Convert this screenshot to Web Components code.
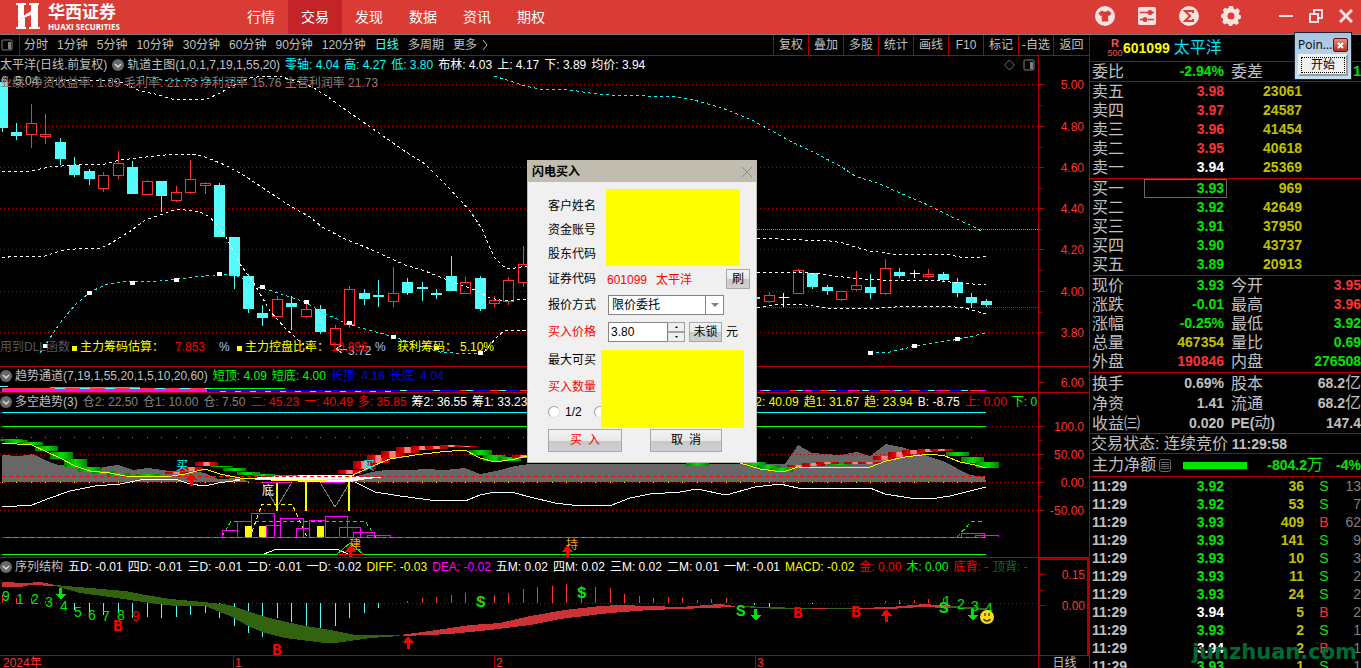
<!DOCTYPE html>
<html lang="zh-CN">
<head>
<meta charset="utf-8">
<title>华西证券 - 太平洋 601099</title>
<style>
html, body {
  margin: 0;
  height: 100%;
  background: #000;
  overflow: hidden;
}
body {
  font: 12px/18px "Liberation Sans", "Noto Sans CJK SC", sans-serif;
  color: #c0c0c0;
}
</style>
</head>
<body>
<trade-app></trade-app>

<script>
const RESET = `
:host, *, ::before, ::after { box-sizing: border-box; }
button, input, select {
  margin: 0;
  padding: 0;
  border: 0;
  background: none;
  font: inherit;
  color: inherit;
  white-space: nowrap;
}
svg { display: block; }
.r { color: #ff3232; }
.g { color: #00e600; }
.y { color: #c0c000; }
.w { color: #fff; }
`;

function define(name, html, extra) {
  customElements.define(name, class extends HTMLElement {
    constructor() {
      super();
      this.attachShadow({ mode: 'open' });
      this.shadowRoot.innerHTML = typeof html === 'function' ? html(this) : html;
      if (extra) extra(this);
    }
  });
}

/* ---------- red application bar ---------- */

const tabs = ['行情', '交易', '发现', '数据', '资讯', '期权'];

define('app-header', `
<style>
${RESET}
:host {
  display: flex;
  height: 35px;
  background: #d83c35;
  border-bottom: 1px solid #7d7d7d;
  color: #fff;
}
.brand {
  display: flex;
  align-items: center;
  gap: 8px;
  width: 234px;
  padding-left: 16px;
}
.brand svg { margin-bottom: 2px; }
.brand b {
  display: block;
  padding-top: 2px;
  font: 700 17px/18px "Liberation Serif", "Noto Sans CJK SC", serif;
}
.brand small {
  display: block;
  font: 700 8px/10px "Open Sans", sans-serif;
}
nav { display: flex; }
nav a {
  width: 54px;
  font-size: 14px;
  line-height: 34px;
  text-align: center;
  color: #fff;
  text-decoration: none;
}
nav a.on { background: #c42428; }
.icons { display: flex; margin-left: auto; opacity: .85; }
.icons button { width: 42px; display: grid; place-items: center; padding-bottom: 2px; }
.icons button.win { width: 30px; }
.icons .first { margin-left: 19px; }
</style>
<div class="brand">
  <svg width="24" height="26" viewBox="0 0 24 26" fill="#fff">
    <path d="M0 0h10v2H8v10.500L15 8V2h-2V0h10v2h-1v7C16 12 7 14 2 19V2H0z"/>
    <path d="M2 20C4 16 8 15 9 14.500V24h1v2H0v-2h2zM15 11l7-3v16h2v2H13v-2h2z"/>
  </svg>
  <div><b>华西证券</b><small>HUAXI SECURITIES</small></div>
</div>
<nav>${tabs.map(t => `<a href="#"${t === '交易' ? ' class="on"' : ''}>${t}</a>`).join('')}</nav>
<div class="icons">
  <button aria-label="皮肤"><svg width="20" height="20" viewBox="0 0 20 20"><circle cx="10" cy="10" r="10" fill="#fff"/><path d="M7 4.500 3.500 7l1.800 3 1.500-.8V15.500h6.400V9.200l1.500.8 1.800-3L13 4.500q-3 2.500-6 0z" fill="#d83c35"/></svg></button>
  <button aria-label="设置"><svg width="18" height="18" viewBox="0 0 18 18"><rect width="18" height="18" rx="2" fill="#fff"/><path d="M2 5.500h8M14 5.500h2M2 12.500h4M10 12.500h6" stroke="#d83c35" stroke-width="1.500"/><circle cx="12" cy="5.500" r="2.500" fill="#d83c35"/><circle cx="7" cy="12.500" r="2.500" fill="#d83c35"/></svg></button>
  <button aria-label="统计"><svg width="20" height="20" viewBox="0 0 20 20"><circle cx="10" cy="10" r="10" fill="#fff"/><path d="M14 7V5H6l5 5-5 5h8v-2" fill="none" stroke="#d83c35" stroke-width="2"/></svg></button>
  <button aria-label="选项"><svg width="20" height="20" viewBox="0 0 20 20"><path fill="#fff" fill-rule="evenodd" d="M8 0h4l.6 2.800 1.600.7L16.700 2 19 5l-1.400 2.400.5 1.400L20 9.500v3l-2.500.9-.7 1.400L18 17l-2.500 2-2.300-1.200-1.300.5L11 20H8l-.8-2-1.500-.6L3.500 18.500 1.200 16l1-2.300-.6-1.400L0 11.500v-3l2.300-.9.6-1.400L1.700 4 4 1.700l2.200 1.100L7.500 2zM10 6.500a3.500 3.500 0 1 0 0 7 3.500 3.500 0 0 0 0-7z"/></svg></button>
  <button class="win first" aria-label="最小化"><svg width="14" height="14"><path d="M0 7h14" stroke="#fff" stroke-width="2"/></svg></button>
  <button class="win" aria-label="还原"><svg width="14" height="14" fill="none" stroke="#fff" stroke-width="2"><path d="M1 5h8v8H1zM5 5V1h8v8H9"/></svg></button>
  <button class="win" aria-label="关闭"><svg width="14" height="14"><path d="M1 1l12 12M13 1L1 13" stroke="#fff" stroke-width="3"/></svg></button>
</div>
`);

/* ---------- period bar ---------- */

const periods = ['分时', '1分钟', '5分钟', '10分钟', '30分钟', '60分钟', '90分钟', '120分钟', '日线', '多周期', '更多'];
const tools = ['复权', '叠加', '多股', '统计', '画线', 'F10', '标记', '-自选', '返回'];
const PANEL_ICON = `<svg width="12" height="12"><rect x="1" y="1" width="10" height="10" rx="1" fill="none" stroke="#808080" stroke-width="1"/><path d="M7 3h3v7H7z" fill="#808080"/></svg>`;

define('period-bar', `
<style>
${RESET}
:host {
  display: flex;
  height: 21px;
  border-bottom: 1px solid #b00000;
}
.layout { width: 20px; padding-right: 6px; display: grid; place-items: center; border-right: 1px solid #b00000; }
.periods { display: flex; gap: 9px; padding-left: 4px; line-height: 20px; }
.periods .on { color: #54fcfc; }
.periods .more { display: flex; align-items: center; gap: 5px; }
.tools { display: flex; margin-left: auto; line-height: 20px; }
.tools button { width: 35px; border-left: 1px solid #b00000; text-align: center; }
.tools button:last-child { width: 36px; }
</style>
<button class="layout" aria-label="布局">${PANEL_ICON}</button>
<div class="periods">
${periods.map(p => `<button class="${p === '日线' ? 'on' : p === '更多' ? 'more' : ''}">${p}${p === '更多' ? '<svg width="6" height="12" fill="none" stroke="#c0c0c0"><path d="M1 1l4 5-4 5"/></svg>' : ''}</button>`).join('')}
</div>
<div class="tools">${tools.map(t => `<button>${t}</button>`).join('')}</div>
`);

/* ---------- chart drawing ---------- */

const STEP = 14.47;
const barX = i => Math.round(2 + STEP * i) + 0.5;
const poly = (pts, color, more = '') => `<polyline points="${pts}" fill="none" stroke="${color}" ${more}/>`;
const area = (pts, color) => `<polygon points="${pts}" fill="${color}"/>`;
const hline = (y, color, dash = '', x1 = 0, x2 = '100%') => `<line x1="${x1}" x2="${x2}" y1="${y}.5" y2="${y}.5" stroke="${color}"${dash ? ` stroke-dasharray="${dash}"` : ''}/>`;
const vline = (x, y1, y2, color, w = 1) => `<line x1="${x}" x2="${x}" y1="${y1}" y2="${y2}" stroke="${color}" stroke-width="${w}"/>`;
const box = (x, y, w, h, color) => `<rect x="${x}" y="${y}" width="${w}" height="${h}" fill="${color}"/>`;
const label = (x, y, t, color, more = '') => `<text x="${x}" y="${y}" fill="${color}" ${more}>${t}</text>`;
const upArrow = (x, y) => `<path d="M${x} ${y}l6 7h-4v6h-3v-6h-4z" fill="#f00"/>`;
const downArrow = (x, y) => `<path d="M${x - 1} ${y}h3v6h4l-5 6-6-6h4z" fill="#00e600"/>`;

// index, body top, body bottom, high, low, kind (d = down, u = up, x = flat)
const candles = [
  [0,82,128,80,132,'d'],[1,132,136,123,140,'d'],[2,123,135,104,148,'u'],[3,134,137,114,144,'u'],
  [4,142,159,138,165,'d'],[5,165,175,157,177,'d'],[6,171,179,169,185,'d'],[7,175,189,172,192,'u'],
  [8,163,176,151,179,'u'],[9,167,194,161,194,'d'],[10,181,195,180,195,'u'],[11,181,196,181,212,'d'],
  [12,192,201,186,202,'u'],[13,179,193,160,194,'u'],[14,183,186,182,194,'u'],[15,185,237,183,237,'d'],
  [16,237,276,237,289,'d'],[17,276,309,274,313,'d'],[18,313,318,305,326,'d'],[19,299,317,296,317,'u'],
  [20,303,307,296,330,'d'],[21,309,317,302,318,'u'],[22,309,332,305,334,'d'],[23,328,345,325,345,'u'],
  [24,289,325,286,328,'u'],[25,293,299,289,305,'d'],[26,295,297,280,307,'d'],[27,293,302,267,307,'u'],
  [28,282,293,278,295,'d'],[29,287,289,282,301,'d'],[30,293,295,289,299,'d'],[31,276,291,256,291,'d'],
  [32,282,294,277,294,'u'],[33,278,309,276,311,'d'],[34,300,304,296,307,'u'],[35,280,302,277,305,'u'],
  [36,264,283,246,287,'u'],[52,297,299,297,299,'d'],[53,295,302,292,303,'u'],[54,297,298,293,307,'x'],
  [55,270,294,269,294,'u'],[56,273,287,273,289,'d'],[57,287,291,285,295,'d'],[58,291,300,291,301,'u'],
  [59,285,290,271,291,'u'],[60,287,293,274,299,'d'],[61,268,294,259,295,'u'],[62,272,276,268,278,'d'],
  [63,273,274,270,278,'x'],[64,274,277,269,278,'u'],[65,274,280,272,282,'d'],[66,282,293,278,297,'d'],
  [67,297,303,293,308,'d'],[68,301,305,299,307,'d']
];

function drawCandle([i, top, bottom, high, low, kind]) {
  const x = barX(i);
  if (kind === 'x') return vline(x, high, low, '#fff') + hline(top, '#fff', '', x - 5, x + 5);
  if (kind === 'd') return vline(x, high, low, '#54fcfc') + box(x - 5.5, top, 11, bottom - top, '#54fcfc');
  return vline(x, high, top, '#ff3232') + vline(x, bottom, low, '#ff3232') +
    `<rect x="${x - 5}" y="${top + 0.5}" width="10" height="${bottom - top - 1}" fill="none" stroke="#ff3232"/>`;
}

function drawPrice() {
  const dash = 'stroke-dasharray="3 3"';
  let s = [84, 126, 167, 208, 249, 291, 332].map(y => hline(y, '#b00000', '1 3')).join('');
  s += hline(229, '#30d830', '1 1', 527) + hline(307, '#c01818', '1 1', 527);
  s += candles.map(drawCandle).join('');
  s += poly('48,80 110,80 123,83 140,91 155,94 172,99 205,100 222,92 228,88 250,78 264,76 282,77 303,83 314,88 328,97 343,108 403,150 425,164 447,186 460,200 470,211 482,229 494,257 503,266 509,269 527,266', '#fff', dash);
  s += poly('2,171 25,172 50,167 75,165 105,164 120,160 155,156 175,154 192,154 205,157 225,165 245,176 272,194 292,207 310,217 322,227 345,239 370,249 405,265 425,271 450,281 475,290 490,298 505,301 527,299', '#fff', dash);
  s += poly('2,258 15,256 35,257 45,256 60,251 75,249 100,248 108,245 132,230 145,220 160,215 177,209 200,212 210,217 225,235 240,264 255,285 270,311 285,328 297,339 310,350', '#fff', dash);
  s += poly('484,352 490,345 497,337 505,330 520,330 527,331', '#fff', dash);
  s += poly('757,238 780,239 830,241 843,243 855,247 870,251 900,255 945,254 960,257 975,258 986,256', '#fff', dash);
  s += poly('757,273 800,272 820,274 850,278 880,280 930,280 960,283 986,285', '#fff', dash);
  s += poly('757,308 772,305 800,304 825,308 850,309 880,308 910,306 945,306 965,308 986,314', '#fff', dash);
  s += poly('40,353 50,338 60,323 75,305 90,292 105,285 120,282 160,281 195,277 225,274 237,276 258,287 275,292 290,297 305,302 322,312 345,323 368,330 395,337 415,345 440,352 455,353 480,353', '#00fcfc', dash);
  s += poly('141,76 165,80 240,80 250,78', '#00fcfc', dash);
  s += poly('494,76 510,81 525,86 540,89 570,90 590,93 610,95 645,96 675,97 690,99 705,103 722,108 752,120 770,130 790,141 815,153 840,166 855,176 880,184 900,193 930,206 950,216 972,226 983,232', '#00fcfc', dash);
  s += poly('870,353 890,352 915,346 960,339 986,333', '#00fcfc', dash);
  s += [[45,346],[89,293],[132,283],[176,280],[219,274],[262,287],[306,302],[349,323],[393,337],[436,348],[480,353],[870,353],[914,346],[957,339]]
    .map(([x, y]) => box(x - 2, y - 2, 5, 4, '#fff')).join('');
  s += poly('342,345 336,349 342,353', '#c0c0c0') + hline(349, '#c0c0c0', '', 336, 347);
  s += label(348, 355, '3.72', '#c0c0c0') + label(1, 85, '6', '#c0c0c0') + label(15, 85, '5.04', '#c0c0c0');
  return s;
}

function drawChannel() {
  return `<g stroke-width="1">${hline(386, '#54fcfc', '', 0, 8)}${hline(387, '#00fc00', '', 50, 140)}${hline(388, '#00fc00', '', 140, 285)}</g>` +
    box(2, 388, 205, 2, '#ff3232') + hline(388, '#54fcfc', '10 15', 55, 210) +
    box(2, 390, 205, 2, '#f0f') + box(207, 390, 179, 2, '#00f') + hline(391, '#54fcfc', '6 9', 220, 400) +
    hline(390, '#00f', '', 386, 986) + hline(390, '#ff3232', '10 20', 460, 986) +
    hline(390, '#f0f', '8 36', 760, 986) + hline(390, '#54fcfc', '7 26', 400, 986);
}

// x, middle y, height of the stepped trend ribbon
const downRibbon = [[0,440,2],[5,441,3],[20,443,3],[35,448,5],[50,455,7],[64,463,8],[78,469,5],[92,472,3],[107,474,3],[136,475,2],
  [210,466,1],[223,469,3],[237,473,3],[252,475,2],[266,476,2],[280,476,2],[469,452,5],[483,458,6],[498,459,4],
  [686,464,4],[743,464,4],[757,467,5],[770,470,4],[828,464,1],[946,454,4],[961,460,6],[976,465,6]];
const upRibbon = [[165,473,2],[180,469,4],[195,464,4],[338,472,4],[353,465,8],[367,459,8],[381,454,7],[396,450,6],[411,448,4],
  [425,447,3],[440,446,2],[455,446,1],[512,456,3],[787,466,2],[802,464,3],[816,463,2],[844,463,2],[858,463,2],[873,458,4],
  [888,454,5],[902,452,4],[917,450,3],[930,450,2]];
const steps = [[222,530,237],[237,521,251],[251,513,274],[266,525,280],[280,518,303],[296,528,309],[309,520,325],
  [325,516,347],[339,527,360],[353,532,374],[367,535,390],[961,533,984],[975,535,998]];

function drawTrend() {
  let s = '';
  s += area('2,482 2,455 20,456 33,454 45,460 58,465 70,465 95,470 103,467 118,465 133,470 148,468 170,471 185,470 205,473 218,479 240,478 250,482 340,482 350,478 372,472 385,470 410,470 425,469 445,470 465,468 480,474 500,470 515,466 530,464 785,464 798,445 812,453 840,455 857,452 870,456 886,444 905,448 925,455 945,462 970,475 985,477 986,482', '#686868');
  s += [426, 454, 482, 510].map(y => hline(y, '#b00000', '1 3')).join('');
  s += hline(412, '#00fcfc', '', 2, 986) + hline(426, '#00fc00', '', 2, 986) + hline(437, '#00e600', '1 13.47', 2, 986);
  s += downRibbon.map(([x, y, h]) => box(x, y - h / 2, 23, h, 'url(#green)')).join('');
  s += upRibbon.map(([x, y, h]) => box(x, y - h / 2, 23, h, 'url(#red)')).join('');
  s += hline(482, '#fcfc00', '1 13.47', 2, 986);
  s += area('230,480 262,477 310,475 350,475 365,477 385,477 360,480 350,482 315,482 280,481 250,479', '#fff');
  s += hline(476, '#f00', '4 3', 2, 986);
  s += poly('2,443 32,445 60,458 75,466 90,471 110,473 125,476 165,477 185,474 205,469 220,474 240,478 270,480 310,481 345,479 355,474 375,465 390,459 415,455 440,452 465,450 480,458 495,462 515,459 527,456', '#fcfc00');
  s += poly('740,463 760,469 783,472 798,467 840,468 870,467 886,461 905,457 930,454 945,456 960,462 975,465 986,468', '#fcfc00');
  s += poly('2,507 32,505 50,498 70,491 95,486 120,484 140,480 160,479 178,480 190,484 205,486 218,483 240,480', '#fff');
  s += poly('355,482 375,492 400,496 430,500 465,501 480,495 495,492 515,493 530,497 555,503 580,506 612,505 630,498 650,494 680,492 697,489 726,495 755,487 780,484 798,488 870,488 885,494 910,498 930,499 950,496 986,487', '#fff');
  s += poly('263,484 277,507 291,484', '#808080') + poly('321,484 335,507 349,484', '#808080');
  s += [277, 306, 349].map(x => vline(x, 482, 511, '#fcfc00', 2)).join('');
  s += hline(482, '#f0f', '', 263, 291) + hline(482, '#f0f', '', 321, 345);
  s += hline(537, '#00e600', '', 2, 986) + hline(537, '#f0f', '4 4', 2, 986) + hline(537, '#f00', '3 13', 2, 986);
  s += poly('222,537 231,521 365,521 376,537', '#00fc00', 'stroke-dasharray="4 3"');
  s += poly('957,537 972,521 985,521', '#00fc00', 'stroke-dasharray="4 3"');
  s += poly('252,532 262,504 292,504 300,522 307,537', '#fcfc00', 'stroke-dasharray="4 3"');
  s += steps.map(([x, y, x2]) => `<path d="M${x} 537V${y}H${x2}V537" fill="none" stroke="#f0f"/>`).join('');
  s += [245, 259, 317].map(x => box(x, 526, 7, 11, '#fcfc00')).join('');
  s += hline(554, '#00fc00', '', 2, 986);
  s += poly('264,554 277,549 337,549 350,555', '#fff') + poly('337,554 350,543 363,554', '#00fc00') + hline(554, '#f00', '', 337, 363);
  s += label(176, 470, '买', '#00fcfc') + label(363, 470, '买', '#00fcfc') + label(262, 495, '底', '#fff');
  s += label(349, 549, '建', '#ffa020') + label(566, 549, '持', '#ffa020');
  s += upArrow(191, 473) + upArrow(350, 545) + upArrow(567, 545);
  return s;
}

const macdDown = [[5,610],[6,614],[7,615],[8,612],[9,618],[10,617],[11,618],[12,617],[13,615],[14,613],[15,618],[16,626],[17,633],
  [18,637],[19,618],[20,622],[21,628],[22,629],[23,626],[24,618],[25,613],[26,608],[52,605],[53,607],[56,604],[62,604]];
const macdUp = [[0,595],[1,598],[2,598],[3,601],[28,601],[29,598],[30,597],[31,595],[32,593],[33,596],[34,595],[35,593],[36,589],[37,587],
  [38,586],[39,584],[40,586],[41,587],[42,588],[43,594],[44,596],[45,598],[46,597],[47,598],[48,600],[49,599],[50,598],
  [61,601],[62,600],[63,600],[64,599],[65,598]];
const counts = [[2,600,9],[16,603,1],[31,603,2],[45,606,3],[60,610,4],[74,616,5],[88,619,6],[102,620,7],[117,619,8],[943,605,1],[957,608,2],[971,610,3],[985,612,4]];

function drawSequence() {
  const mark = 'font-weight="700" font-size="16" font-family="Liberation Mono"';
  let s = hline(603, '#b00000', '1 3');
  s += macdDown.map(([i, y]) => vline(barX(i), 603, y, '#54fcfc')).join('');
  s += macdUp.map(([i, y]) => vline(barX(i), y, 603, '#ff3232')).join('');
  s += area('2,582 25,583 40,582 55,585 55,586 30,585 20,587 2,587', '#cc3237');
  s += area('55,585 90,588 125,591 140,594 170,599 203,602 230,605 250,612 270,618 300,625 330,630 355,635 400,635 400,636 370,638 335,643 325,643 285,638 265,633 250,627 230,616 205,606 175,606 150,603 110,597 80,593 55,586', '#326410');
  s += area('400,635 430,631 470,625 500,623 530,616 565,610 600,606 620,605 680,607 720,604 735,606 735,607 680,609 650,610 610,613 560,619 530,625 490,630 450,634 405,636', '#cc3237');
  s += area('740,606 770,607 800,608 812,608 812,609 780,609 740,607', '#326410') + box(812, 608, 16, 1, '#cc3237') + box(828, 608, 30, 1, '#326410');
  s += area('858,608 890,607 925,604 950,606 950,608 920,607 890,609 858,609', '#cc3237') + area('950,606 986,608 986,610 950,608', '#326410');
  s += counts.map(([x, y, t]) => label(x, y + 1, t, '#00e600', 'font-size="14"')).join('') + label(132, 621, '9', '#f00', 'font-size="14"');
  s += [[476,607],[577,598],[736,616],[939,613]].map(([x, y]) => label(x, y, 'S', '#00e600', mark)).join('');
  s += [[113,631],[272,655],[793,618],[851,617]].map(([x, y]) => label(x, y, 'B', '#f00', mark)).join('');
  s += downArrow(60, 588) + downArrow(755, 609) + downArrow(972, 609) + upArrow(408, 636) + upArrow(886, 609);
  s += '<g shape-rendering="auto"><circle cx="987" cy="617" r="7" fill="#fcd820"/><path d="M983.500 619q3.500 4 7 0M985 613v3M989 613v3" fill="none" stroke="#403000" stroke-width="1.300"/></g>';
  return s;
}

const drawings = {
  price: { top: 56, draw: drawPrice, axis: [[84,'5.00'],[126,'4.80'],[167,'4.60'],[208,'4.40'],[249,'4.20'],[291,'4.00'],[332,'3.80']], minor: [105,147,188,229,270,312] },
  channel: { top: 367, draw: drawChannel, axis: [[382,'6.00']], minor: [] },
  trend: { top: 393, draw: drawTrend, axis: [[426,'100.0'],[454,'50.00'],[482,'0.00'],[510,'-50.00']], minor: [440,468,496] },
  sequence: { top: 558, draw: drawSequence, axis: [[572,'0.15'],[603,'0.00']], minor: [588] }
};

define('chart-pane', el => {
  const d = drawings[el.getAttribute('kind')];
  return `
<style>
${RESET}
:host {
  display: grid;
  grid-template-columns: minmax(0, 1fr) 51px;
  border-bottom: 1px solid #b00000;
  overflow: hidden;
}
.plot { display: grid; min-width: 0; min-height: 0; overflow: hidden; }
.plot > * { grid-area: 1 / 1; min-width: 0; min-height: 0; }
.text { display: flex; flex-direction: column; justify-content: space-between; overflow: hidden; }
.axis { border-left: 1px solid #b00000; }
:host([kind="sequence"]) .axis { border: 2px solid #b00000; border-bottom: 0; }
svg { width: 100%; height: 100%; font-size: 12px; }
</style>
<div class="plot">
  <svg shape-rendering="crispEdges">
    <defs>
      <linearGradient id="green"><stop offset="0" stop-color="#008000"/><stop offset=".5" stop-color="#00e000"/><stop offset="1" stop-color="#008000"/></linearGradient>
      <linearGradient id="red"><stop offset="0" stop-color="#a00000"/><stop offset=".35" stop-color="#f00000"/><stop offset=".38" stop-color="#ff8080"/><stop offset=".62" stop-color="#ff8080"/><stop offset=".65" stop-color="#f00000"/><stop offset="1" stop-color="#a00000"/></linearGradient>
    </defs>
    <g transform="translate(0 ${-d.top})">${d.draw()}</g>
  </svg>
  <div class="text"><slot></slot><slot name="foot"></slot></div>
</div>
<div class="axis">
  <svg shape-rendering="crispEdges"><g transform="translate(0 ${-d.top})">
    ${d.axis.map(([y, t]) => hline(y, '#b00000', '', 0, 5) + label(45, y + 5, t, '#ff3232', 'text-anchor="end"')).join('')}
    ${d.minor.map(y => hline(y, '#b00000', '', 0, 3)).join('')}
  </g></svg>
</div>`;
});

/* indicator caption: name plus readings, each "text|colour|extra left margin" */
define('indicator-line', el => `
<style>
${RESET}
:host { display: flex; gap: 5px; height: 18px; line-height: 18px; white-space: nowrap; }
svg { flex: none; margin: 3px 0; }
.end { margin-left: auto; display: flex; align-items: center; gap: 8px; padding-right: 3px; }
span { flex: none; }
.name { margin-left: -2px; }
</style>
<slot></slot>
<svg width="12" height="12"><circle cx="6" cy="6" r="6" fill="#686868"/><path d="M3 5l3 3 3-3" fill="none" stroke="#ddd" stroke-width="1.500"/></svg>
<span class="name">${el.getAttribute('name')}</span>
${el.getAttribute('items').split(';').map(x => {
  const [t, c, m] = x.split('|');
  return `<span style="color:${c}${m ? `;margin-left:${m}px` : ''}">${t}</span>`;
}).join('')}
${el.hasAttribute('controls') ? `<span class="end"><svg width="11" height="12" fill="none" stroke="#707070"><path d="M5.500 1l5 5-5 5-5-5z"/></svg>${PANEL_ICON}</span>` : ''}
`);

define('chart-stack', `
<style>
${RESET}
:host {
  display: grid;
  grid-template-rows: minmax(311px, 1fr) 26px 165px 98px 12px;
  min-width: 0;
}
.fin { color: #808080; white-space: nowrap; }
.foot { display: flex; white-space: nowrap; padding-bottom: 10px; color: #fcfc00; }
.foot i { font-style: normal; }
.dim { color: #585858; }
.foot .dim { width: 72px; }
.sq::before { content: ""; display: inline-block; width: 5px; height: 5px; margin-right: 3px; background: #fcfc00; }
.sq { width: 103px; }
.sq + .v { width: 44px; color: #f00; }
.p { width: 18px; color: #a0c8ff; }
.sq + .far { width: 57px; }
.p2 { width: 22px; color: #a0c8ff; }
.foot .profit { width: 63px; }
.time {
  display: grid;
  grid-template-columns: 233px 261px 261px 1fr 51px;
  line-height: 15px;
  color: #ff3232;
  overflow: hidden;
}
.time span { padding-left: 3px; }
.time span + span { border-left: 1px solid #b00000; padding-left: 1px; }
.time span.unit { color: #c0c0c0; text-align: center; }
</style>
<chart-pane kind="price">
  <div>
    <indicator-line controls name="轨道主图(1,0,1,7,19,1,55,20)" items="零轴: 4.04|#00fcfc;高: 4.27|#00fcfc;低: 3.80|#00fcfc;布林: 4.03|#fff;上: 4.17|#fff;下: 3.89|#fff;均价: 3.94|#fff">太平洋(日线.前复权)</indicator-line>
    <div class="fin">业绩: 净资收益率: 1.89 毛利率: 21.73 净利润率 15.76 主营利润率 21.73</div>
  </div>
  <div class="foot" slot="foot"><i class="dim">用到DLL函数</i><i class="sq">主力筹码估算：</i><i class="v">7.853</i><i class="p">%</i><i class="sq" style="width:94px">主力控盘比率：</i><i class="v">10.896</i><i class="p2">%</i><i class="profit">获利筹码：</i><i>5.10%</i></div>
</chart-pane>
<chart-pane kind="channel">
  <indicator-line name="趋势通道(7,19,1,55,20,1,5,10,20,60)" items="短顶: 4.09|#00fc00;短底: 4.00|#00fc00;长顶: 4.16|#00f;长底: 4.04|#00f"></indicator-line>
</chart-pane>
<chart-pane kind="trend">
  <indicator-line name="多空趋势(3)" items="仓2: 22.50|#808080;仓1: 10.00|#808080;仓: 7.50|#808080;二: 45.23|#f00;一: 40.49|#f00;多: 35.85|#f00;筹2: 36.55|#fff;筹1: 33.23|#fff;趋2: 40.09|#fcfc00|211;趋1: 31.67|#fcfc00;趋: 23.94|#fcfc00;B: -8.75|#fff;上: 0.00|#f00;下: 0.00|#00fc00"></indicator-line>
</chart-pane>
<chart-pane kind="sequence">
  <indicator-line name="序列结构" items="五D: -0.01|#fff;四D: -0.01|#fff;三D: -0.01|#fff;二D: -0.01|#fff;一D: -0.02|#fff;DIFF: -0.03|#fcfc00;DEA: -0.02|#f0f;五M: 0.02|#fff;四M: 0.02|#fff;三M: 0.02|#fff;二M: 0.01|#fff;一M: -0.01|#fff;MACD: -0.02|#fcfc00;金: 0.00|#f00;木: 0.00|#00fc00;底背: -|#f00;顶背: -|#087028"></indicator-line>
  <div class="dim" slot="foot">用到未来数据</div>
</chart-pane>
<div class="time"><span>2024年</span><span>1</span><span>2</span><span>3</span><span class="unit">日线</span></div>
`);

/* ---------- quote panel ---------- */

const asks = [['卖五','3.98','23061','r'],['卖四','3.97','24587','r'],['卖三','3.96','41454','r'],['卖二','3.95','40618','r'],['卖一','3.94','25369','w']];
const bids = [['买一','3.93','969','g'],['买二','3.92','42649','g'],['买三','3.91','37950','g'],['买四','3.90','43737','g'],['买五','3.89','20913','g']];
const quote = [['现价','3.93','g','今开','3.95','r'],['涨跌','-0.01','g','最高','3.96','r'],['涨幅','-0.25%','g','最低','3.92','g'],['总量','467354','y','量比','0.69','g'],['外盘','190846','r','内盘','276508','g']];
const YI = '<span class="t">亿</span>';
const basics = [['换手','0.69%','','股本','68.2' + YI,''],['净资','1.41','','流通','68.2' + YI,''],['收益㈢','0.020','','<b>PE(</b>动<b>)</b>','147.4','']];
const ticks = [['3.92',36,'S',13],['3.92',53,'S',7],['3.93',409,'B',62],['3.93',141,'S',9],['3.93',10,'S',3],['3.93',11,'S',2],['3.93',24,'S',2],['3.94',5,'B',2],['3.93',2,'S',1],['3.94',2,'B',1],['3.93',1,'S',1]];

const depthRow = ([n, p, v, c]) => `<tr><th>${n}</th><td class="${c}${n === '买一' ? ' cur' : ''}">${p}</td><td class="y">${v}</td><td></td></tr>`;
const pairRow = ([a, av, ac, b, bv, bc]) => `<tr><th>${a}</th><td class="${ac}">${av}</td><th class="second">${b}</th><td class="${bc}">${bv}</td></tr>`;

define('quote-panel', `
<style>
${RESET}
:host {
  display: block;
  border-left: 1px solid #b00000;
  overflow: hidden;
  font-size: 14px;
  font-weight: 700;
}
.head { display: flex; align-items: center; height: 26px; padding-left: 17px; }
.badge { width: 16px; font: 700 11px/11px "Liberation Sans"; color: #ff5050; text-align: center; }
.badge small { display: block; font: 400 9px/9px "Liberation Sans"; }
.code { color: #fcfc00; }
.head .name { margin-left: 4px; color: #00e0fc; }
.name, th, .status span, .t { font-size: 16px; font-weight: 400; }
th b { font-size: 14px; }
section { border-top: 1px solid #b00000; }
table { width: 100%; border-collapse: collapse; table-layout: fixed; }
td, th { padding: 0; height: 19px; line-height: 19px; white-space: nowrap; text-align: right; }
th { text-align: left; padding-left: 2px; }
th.second { padding-left: 4px; }
.cur { outline: 1px solid #686868; outline-offset: -1px; }
.c1 { width: 54px; }
.c2 { width: 83px; }
.c3 { width: 75px; }
td:nth-child(2) { padding-right: 3px; }
.ratio { height: 20px; }
.five { height: 97px; }
.three { height: 61px; }
.status { height: 20px; padding-left: 1px; line-height: 19px; white-space: nowrap; }
.flow { display: flex; align-items: center; height: 23px; padding-left: 2px; white-space: nowrap; }
.flow svg { margin: 0 12px 0 3px; }
.flow .bar { width: 64px; height: 7px; background: #00e600; }
.flow b { margin-left: auto; line-height: 21px; }
.flow b + b { width: 38px; margin-left: 0; text-align: right; }
.ticks td { height: 18px; line-height: 18px; }
.ticks td:first-child { text-align: left; padding-left: 2px; }
.ticks td:nth-child(2) { padding-right: 0; }
.ticks td:nth-child(4) { font-weight: 400; text-align: center; }
.ticks td:nth-child(5) { font-weight: 400; color: #808080; }
.t1 { width: 50px; }
.t2 { width: 84px; }
.t3 { width: 80px; }
.t4 { width: 40px; }
</style>
<div class="head"><span class="badge">R<small>500</small></span><span class="code">601099</span><span class="name">太平洋</span></div>
<section class="ratio"><table><col class="c1"><col class="c2"><col class="c1"><col>${pairRow(['委比', '-2.94%', 'g', '委差', '1', 'g'])}</table></section>
<section class="five"><table><col class="c1"><col class="c2"><col class="c3"><col>${asks.map(depthRow).join('')}</table></section>
<section class="five"><table><col class="c1"><col class="c2"><col class="c3"><col>${bids.map(depthRow).join('')}</table></section>
<section class="five"><table><col class="c1"><col class="c2"><col class="c1"><col>${quote.map(pairRow).join('')}</table></section>
<section class="three"><table><col class="c1"><col class="c2"><col class="c1"><col>${basics.map(pairRow).join('')}</table></section>
<section class="status"><span>交易状态: 连续竞价</span> 11:29:58</section>
<section class="flow"><span class="t">主力净额</span><svg width="12" height="13" fill="none" stroke="#686868"><rect x=".5" y=".5" width="11" height="12" rx="2"/><path d="M2 3.500h8M2 5.500h8M2 7.500h8M2 9.500h8"/></svg><span class="bar"></span><b class="g">-804.2<span class="t">万</span></b><b class="g">-4%</b></section>
<section class="ticks"><table><col class="t1"><col class="t2"><col class="t3"><col class="t4"><col>
${ticks.map(([p, v, s, n]) => `<tr><td>11:29</td><td class="${p === '3.94' ? 'w' : 'g'}">${p}</td><td class="y">${v}</td><td class="${s === 'S' ? 'g' : 'r'}">${s}</td><td>${n}</td></tr>`).join('')}
</table></section>
`);

/* ---------- floating windows ---------- */

define('order-dialog', `
<style>
${RESET}
:host {
  position: absolute;
  left: 527px;
  top: 160px;
  width: 230px;
  background: #f0f0f0;
  border: 1px solid #c0bcb0;
  color: #000;
}
header {
  display: flex;
  align-items: center;
  justify-content: space-between;
  height: 21px;
  padding: 0 3px 0 4px;
  background: #c0bcb0;
  font-weight: 700;
}
form {
  position: relative;
  display: grid;
  grid-template-columns: 59px 1fr;
  grid-template-rows: repeat(3, 24px) repeat(2, 26px) repeat(2, 28px) 26px 24px 32px;
  align-items: center;
  padding: 12px 7px 6px 20px;
}
.must { color: #f00; }
.row { display: flex; align-items: center; }
.wide { grid-column: 1 / -1; }
.btn {
  height: 20px;
  border: 1px solid #a8a8a8;
  background: linear-gradient(#f4f4f4, #e8e8e8 50%, #c8c8c8 51%, #d0d0d0);
}
.stock { display: flex; gap: 9px; width: 119px; color: #f00; padding-top: 2px; }
.refresh { width: 24px; }
.combo { display: grid; width: 116px; height: 20px; margin-left: 1px; border: 1px solid #848484; background: #fff; }
.combo > * { grid-area: 1 / 1; }
.combo select { appearance: none; width: 114px; height: 18px; padding-left: 3px; }
.combo svg { justify-self: end; pointer-events: none; }
.price { width: 60px; height: 20px; margin-left: 1px; padding-left: 2px; border: 1px solid #848484; background: #fff; }
.spin { display: grid; width: 17px; }
.spin button { display: grid; place-items: center; height: 10px; border: 1px solid #a0a0a0; border-left-color: #ddd; background: #f0f0f0; }
.lock { width: 33px; margin: 0 4px; }
.part { gap: 5px; }
.part label { display: flex; align-items: center; gap: 5px; width: 41px; }
.part input { appearance: none; width: 12px; height: 12px; border: 1px solid #a0a0a0; border-right-color: #e0e0e0; border-bottom-color: #e0e0e0; border-radius: 50%; background: #fff; }
.actions .btn { width: 74px; height: 23px; }
.actions .btn + .btn { width: 72px; margin-left: 28px; }
/* privacy masks over the account fields */
.mask { position: absolute; background: #ff0; }
.m1 { left: 78px; top: 7px; width: 134px; height: 77px; }
.m2 { left: 73px; top: 168px; width: 143px; height: 78px; }
</style>
<header>闪电买入<button aria-label="关闭"><svg width="12" height="12" stroke="#888"><path d="M1 1l10 10M11 1L1 11"/></svg></button></header>
<form onsubmit="return false">
  <span>客户姓名</span><span></span>
  <span>资金账号</span><span></span>
  <span>股东代码</span><span></span>
  <span>证券代码</span><div class="row"><span class="stock"><span>601099</span><span>太平洋</span></span><button class="btn refresh">刷</button></div>
  <label for="kind">报价方式</label><div class="row"><div class="combo"><select id="kind"><option>限价委托</option></select><svg width="18" height="18"><path d="M.5 0v18" stroke="#848484"/><path d="M6 7h8l-4 4z" fill="#808080"/></svg></div></div>
  <label for="price" class="must">买入价格</label><div class="row"><input id="price" class="price" value="3.80"><div class="spin"><button aria-label="加"><svg width="3" height="2"><path d="M0 2l1.500-2L3 2z"/></svg></button><button aria-label="减"><svg width="3" height="2"><path d="M0 0h3L1.500 2z"/></svg></button></div><button class="btn lock">未锁</button>元</div>
  <span>最大可买</span><span></span>
  <span class="must">买入数量</span><span></span>
  <div class="row part wide"><label><input type="radio" name="part">1/2</label><label><input type="radio" name="part" aria-label="1/3"></label></div>
  <div class="row actions wide"><button class="btn must">买&ensp;入</button><button class="btn">取&ensp;消</button></div>
  <div class="mask m1"></div>
  <div class="mask m2"></div>
</form>
`);

define('mini-window', `
<style>
${RESET}
:host {
  position: absolute;
  right: 9px;
  top: 32px;
  width: 58px;
  padding: 3px;
  border: 1px solid #223;
  background: linear-gradient(#a8c4e0, #c4e0f0);
  color: #000;
}
header { display: flex; align-items: center; justify-content: space-between; height: 18px; font: 12px/18px "Open Sans", sans-serif; }
.x { display: grid; place-items: center; width: 15px; height: 14px; border: 1px solid #601010; border-radius: 2px; background: linear-gradient(#e09080, #b83020); }
.go { width: 50px; height: 22px; border: 2px outset #f0f0f0; background: #f0f0f0; outline: 1px dotted #000; outline-offset: -4px; }
</style>
<header>Poin...<button class="x" aria-label="关闭"><svg width="7" height="7"><path d="M1 1l5 5M6 1L1 6" stroke="#fff" stroke-width="2"/></svg></button></header>
<button class="go">开始</button>
`);

/* ---------- shell ---------- */

define('trade-app', `
<style>
:host {
  position: relative;
  display: grid;
  grid-template: 35px 21px minmax(0, 1fr) / minmax(0, 1fr) 272px;
  height: 100vh;
  overflow: hidden;
}
app-header { grid-column: 1 / -1; }
quote-panel { grid-area: 2 / 2 / 4 / 3; }
.site {
  position: absolute;
  right: 4px;
  bottom: 4px;
  font: 700 21px/24px "DejaVu Sans", sans-serif;
  color: #006a32;
}
</style>
<app-header></app-header>
<period-bar></period-bar>
<quote-panel></quote-panel>
<chart-stack></chart-stack>
<order-dialog></order-dialog>
<mini-window></mini-window>
<div class="site">junzhuan.com</div>
`);
</script>
</body>
</html>
